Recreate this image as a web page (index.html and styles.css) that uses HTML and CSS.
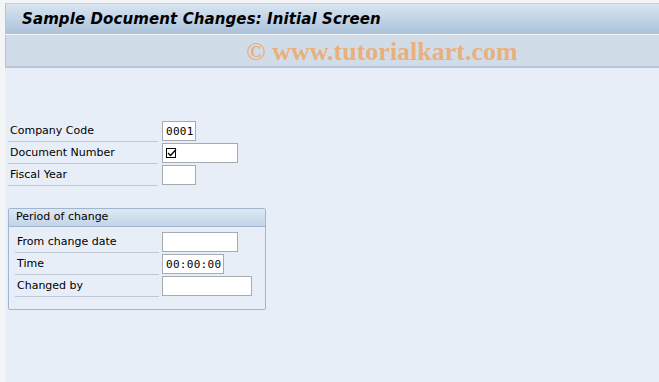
FILE: index.html
```html
<!DOCTYPE html>
<html lang="en">
<head>
  <meta charset="UTF-8" />
  <title>Sample Document Changes: Initial Screen</title>
  <link rel="stylesheet" href="styles.css">
</head>
<body>
  <div class="window">
    <div class="title-bar">Sample Document Changes: Initial Screen</div>
    <div class="toolbar"><span class="watermark">&copy; www.tutorialkart.com</span></div>

    <div class="content">
      <div class="fields">
        <div class="row">
          <label>Company Code</label>
          <span class="field w4">0001</span>
        </div>
        <div class="row">
          <label>Document Number</label>
          <span class="field w10"><svg width="11" height="11" viewBox="0 0 11 11"><rect x="0.5" y="0.5" width="9" height="9" fill="none" stroke="#000"/><path d="M2 5 L4.5 7.5 L10 1.5" fill="none" stroke="#000" stroke-width="1.3"/></svg></span>
        </div>
        <div class="row">
          <label>Fiscal Year</label>
          <span class="field w4"></span>
        </div>
      </div>

      <div class="group">
        <div class="group-title">Period of change</div>
        <div class="row">
          <label>From change date</label>
          <span class="field w10"></span>
        </div>
        <div class="row">
          <label>Time</label>
          <span class="field w8">00:00:00</span>
        </div>
        <div class="row">
          <label>Changed by</label>
          <span class="field w12"></span>
        </div>
      </div>
    </div>
  </div>
</body>
</html>
```

FILE: styles.css
```css
body {
  margin: 0;
  background-color: #f4f5f7;
  font-family: "DejaVu Sans", Tahoma, sans-serif;
  font-size: 11px;
  color: #000;
}
.window {
  margin-left: 5px;
  padding-top: 3px;
  height: 379px;
  display: flex;
  flex-direction: column;
}
.title-bar {
  height: 31px;
  line-height: 30px;
  padding-left: 16px;
  background: linear-gradient(#d9e5f1, #aac2db);
  border-top: 1px solid #c3d1e0;
  border-left: 1px solid #b4c4d6;
  font-weight: bold;
  font-style: italic;
  font-size: 15px;
  letter-spacing: 0.1px;
  box-sizing: border-box;
}
.toolbar {
  height: 33px;
  margin-top: 1px;
  background-color: #d0dde8;
  border-left: 1px solid #b4c4d6;
  border-bottom: 2px solid #b7c7d8;
  box-sizing: border-box;
  text-align: center;
}
.watermark {
  display: inline-block;
  margin-left: 99px;
  font-family: "Liberation Serif", serif;
  font-weight: bold;
  font-size: 26px;
  line-height: 33px;
  color: #eab07c;
}
.content {
  flex: 1;
  background-color: #e7eef7;
  padding: 52px 0 0 3px;
}
.row {
  display: flex;
  align-items: center;
  height: 22px;
}
.row label {
  width: 150px;
  height: 21px;
  line-height: 20px;
  padding-left: 2px;
  box-sizing: border-box;
  border-bottom: 1px solid #bfc9d3;
  margin-right: 3px;
}
.fields .row label {
  margin-right: 4px;
}
.field {
  display: flex;
  align-items: center;
  height: 20px;
  padding: 0 3px;
  box-sizing: border-box;
  background: #fff;
  border: 1px solid #a5abb1;
  font-family: "DejaVu Sans Mono", monospace;
  font-size: 11px;
  letter-spacing: 0.3px;
}
.w4 { width: 34px; }
.w8 { width: 62px; }
.w10 { width: 76px; }
.w12 { width: 90px; }
.group {
  width: 258px;
  height: 102px;
  margin-top: 22px;
  box-sizing: border-box;
  border: 1px solid #9fb6ce;
  border-radius: 2px;
  padding-left: 6px;
}
.group-title {
  height: 17px;
  line-height: 16px;
  margin-left: -6px;
  padding-left: 7px;
  margin-bottom: 4px;
  background: linear-gradient(#dde8f3, #c3d4e6);
  border-bottom: 1px solid #9fb6ce;
}
.group .row label {
  width: 144px;
}
```
